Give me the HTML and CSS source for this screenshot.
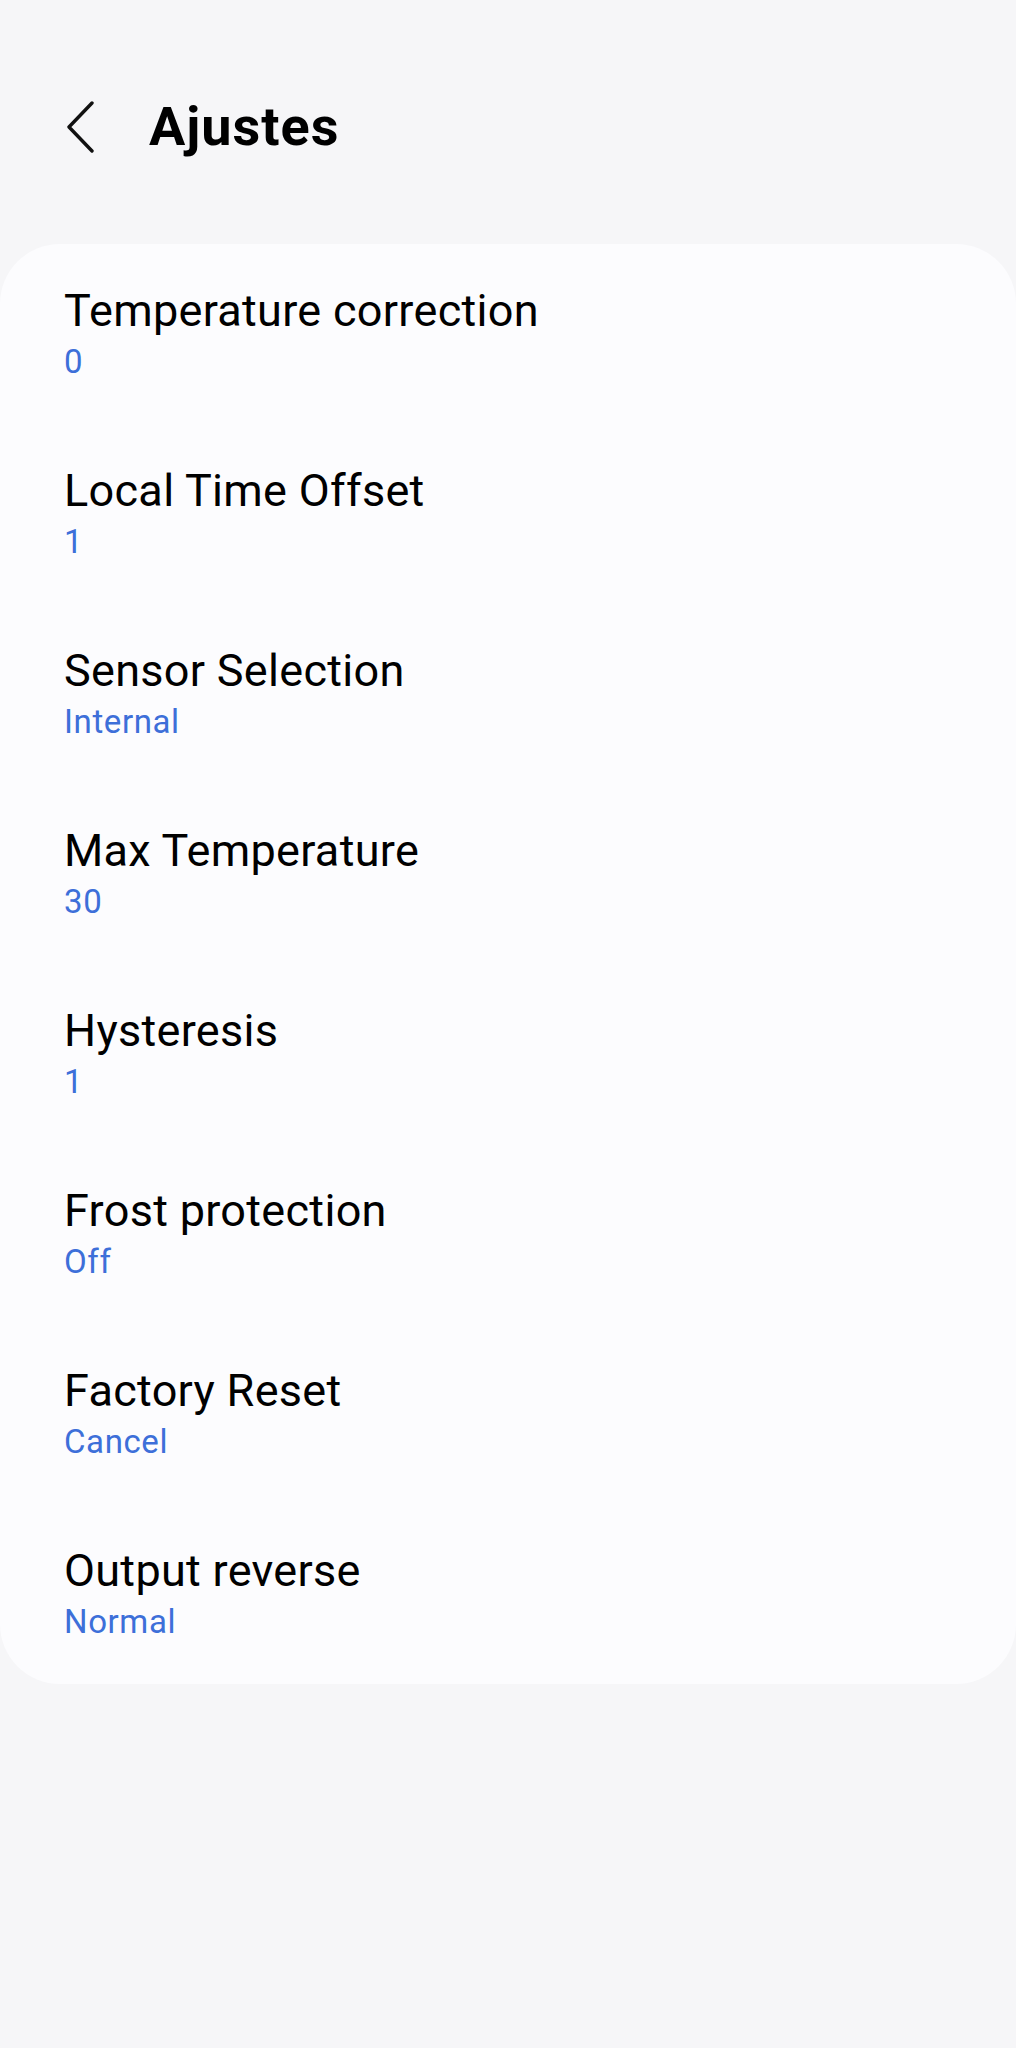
FILE: index.html
```html
<!DOCTYPE html>
<html lang="es">
<head>
<meta charset="utf-8">
<link rel="stylesheet" href="styles.css">
</head>
<body>
<header class="topbar">
  <svg class="back" width="30" height="52" viewBox="0 0 30 52"><path d="M27 2 L4 26 L27 50" fill="none" stroke="#111" stroke-width="3.4" stroke-linecap="round" stroke-linejoin="round"/></svg>
  <h1 class="title">Ajustes</h1>
</header>
<main class="card">
  <div class="item"><div class="label">Temperature correction</div><div class="value">0</div></div>
  <div class="item"><div class="label">Local Time Offset</div><div class="value">1</div></div>
  <div class="item"><div class="label">Sensor Selection</div><div class="value">Internal</div></div>
  <div class="item"><div class="label">Max Temperature</div><div class="value">30</div></div>
  <div class="item"><div class="label">Hysteresis</div><div class="value">1</div></div>
  <div class="item"><div class="label">Frost protection</div><div class="value">Off</div></div>
  <div class="item"><div class="label">Factory Reset</div><div class="value">Cancel</div></div>
  <div class="item"><div class="label">Output reverse</div><div class="value">Normal</div></div>
</main>
</body>
</html>
```
FILE: styles.css
```css
html, body { margin: 0; padding: 0; }
body {
  background: #f6f6f8;
  font-family: Roboto, "Liberation Sans", sans-serif;
  color: #000;
  min-height: 2048px;
}
.topbar {
  display: flex;
  align-items: flex-start;
  height: 244px;
  box-sizing: border-box;
  padding: 95px 0 0 65px;
}
.back { display: block; margin-right: 54px; margin-top: 6px; }
.title {
  margin: 0;
  font-size: 54px;
  line-height: 64px;
  font-weight: 700;
  letter-spacing: 1px;
}
.card {
  background: #fcfcfe;
  border-radius: 60px;
}
.item {
  padding: 41px 64px 0;
  height: 180px;
  box-sizing: border-box;
}
.label {
  font-size: 45px;
  line-height: 52px;
  font-weight: 400;
  letter-spacing: 0.3px;
  color: #000;
}
.value {
  margin-top: 5px;
  font-size: 33px;
  line-height: 39px;
  letter-spacing: 0.6px;
  color: #3d6fd9;
}
```
